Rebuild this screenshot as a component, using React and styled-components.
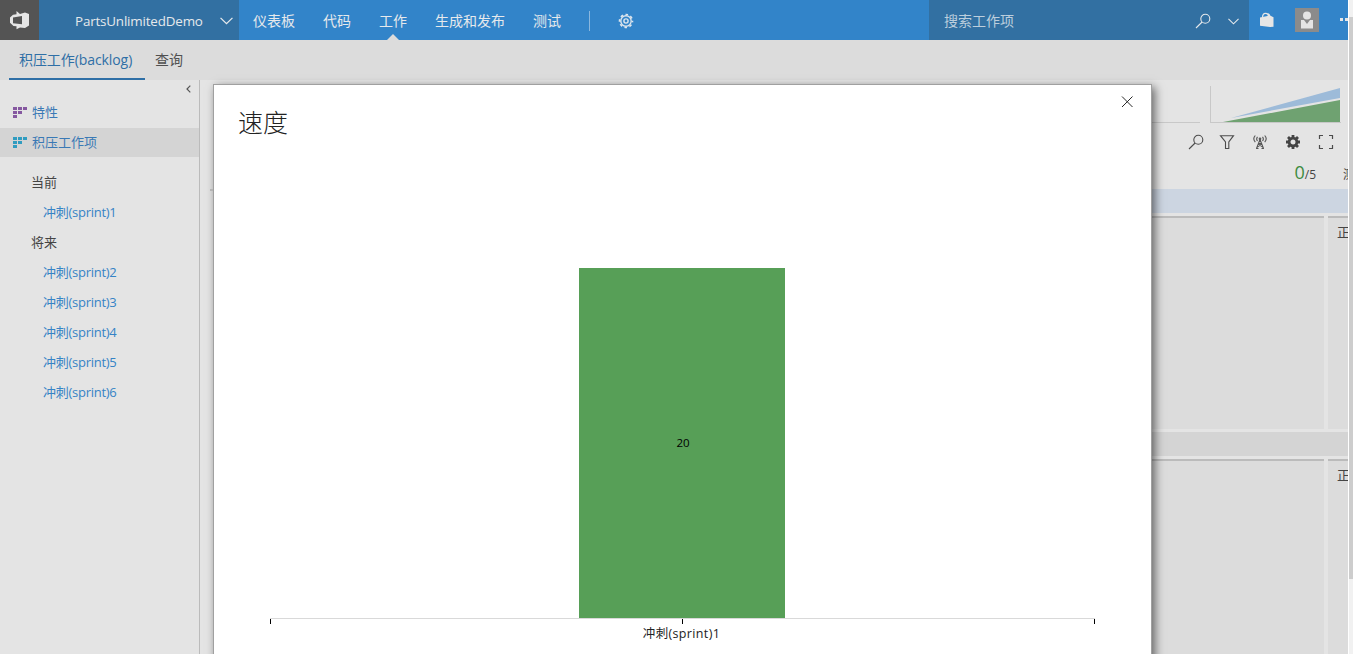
import React from "react";
import styled, { createGlobalStyle } from "styled-components";

const Global = createGlobalStyle`
  *, *::before, *::after { box-sizing: border-box; }
  html, body { margin: 0; overflow: hidden; background: #e4e4e4; }
  body { font-family: "Open Sans", "Noto Sans CJK SC", sans-serif; font-size: 13px; color: #444; }
  svg { display: block; flex: none; }
`;

const Window = styled.div`
  display: flex;
  width: 1353px;
  height: 654px;
  overflow: hidden;
`;
const Page = styled.div`
  position: relative;
  display: flex;
  flex-direction: column;
  width: 1348px;
  overflow: hidden;
`;
const Scrollbar = styled.div`
  width: 5px;
  padding-top: 17px;
  background: #f1f1f1;
  border-left: 1px solid #fff;
`;
const Thumb = styled.div`
  height: 562px;
  background: #cdcdcd;
`;

const TopBar = styled.header`
  display: flex;
  flex: none;
  height: 40px;
  background: #3284c9;
  color: #e6e9ec;
  font-size: 14px;
  line-height: 40px;
  white-space: nowrap;
`;
const LogoBox = styled.div`
  width: 39px;
  padding: 10px 0 0 9px;
  background: #545454;
`;
const Project = styled.div`
  display: flex;
  align-items: center;
  justify-content: space-between;
  width: 200px;
  padding: 1px 6px 0 36px;
  background: #3270a2;
  font-size: 13.4px;
  letter-spacing: -0.17px;
`;
const Nav = styled.nav`
  display: flex;
  flex: 1;
  gap: 28px;
  padding: 1px 0 0 14px;
`;
const NavItem = styled.span`
  position: relative;
  height: 39px;
  &::after {
    content: "";
    display: ${(p) => (p.$active ? "block" : "none")};
    position: absolute;
    left: 8px;
    bottom: 0;
    border: 6px solid transparent;
    border-top: 0;
    border-bottom-color: #dcdcdc;
  }
`;
const NavDivider = styled.span`
  width: 1px;
  height: 20px;
  margin-top: 10px;
  background: #8ab7de;
`;
const NavGear = styled.span`
  padding-top: 12px;
`;
const Search = styled.div`
  display: flex;
  align-items: center;
  width: 320px;
  padding: 2px 10px 0 15px;
  background: #3270a2;
  color: #bccedd;
`;
const SearchText = styled.span`
  flex: 1;
`;
const SearchToggle = styled.span`
  margin-left: 17px;
`;
const Account = styled.div`
  display: flex;
  width: 99px;
  overflow: hidden;
  padding: 8px 0 0 10px;
`;
const Avatar = styled.div`
  width: 24px;
  height: 24px;
  margin: 0 21px 0 20px;
  background: #8b8b8b;
`;

const Tabs = styled.div`
  display: flex;
  flex: none;
  height: 40px;
  padding-left: 9px;
  background: #dcdcdc;
  font-size: 14px;
  line-height: 40px;
  white-space: nowrap;
`;
const Tab = styled.span`
  height: 40px;
  padding: 0 10px;
  color: ${(p) => (p.$active ? "#2f6fa6" : "#505050")};
  border-bottom: ${(p) => (p.$active ? "2px solid #2f6fa6" : "0")};
  width: ${(p) => p.$width};
  letter-spacing: ${(p) => (p.$active ? "-0.08px" : "0")};
`;

const Body = styled.div`
  display: flex;
  flex: 1;
  min-height: 0;
`;
const Sidebar = styled.aside`
  width: 200px;
  border-right: 1px solid #bbb;
`;
const Collapse = styled.div`
  display: flex;
  justify-content: flex-end;
  height: 17px;
  padding: 5px 8px 0 0;
`;
const LevelRow = styled.div`
  display: flex;
  align-items: center;
  gap: 5px;
  height: ${(p) => (p.$selected ? "29px" : "31px")};
  padding: 0 0 2px 13px;
  background: ${(p) => (p.$selected ? "#d4d4d4" : "transparent")};
  color: #3a79b5;
  svg { margin-top: 2px; }
`;
const Sprints = styled.div`
  padding-top: 10px;
`;
const GroupTitle = styled.div`
  height: 30px;
  padding-left: 31px;
  line-height: 30px;
`;
const Sprint = styled.div`
  height: 30px;
  padding-left: 43px;
  line-height: 30px;
  font-size: 13px;
  letter-spacing: -0.27px;
  color: #3583c6;
`;

const Main = styled.main`
  display: flex;
  flex-direction: column;
  flex: 1;
  min-width: 0;
  padding-left: 14px;
`;
const Charts = styled.div`
  display: flex;
  flex: none;
  gap: 10px;
  height: 43px;
  padding-top: 6px;
`;
const ChartBox = styled.div`
  width: ${(p) => p.$width};
  border-bottom: 1px solid #c8c8c8;
  border-left: ${(p) => (p.$axis ? "1px solid #c8c8c8" : "0")};
`;
const Tools = styled.div`
  display: flex;
  flex: none;
  justify-content: flex-end;
  align-items: center;
  gap: 17px;
  height: 38px;
  padding-right: 14px;
  svg:first-child { margin-right: -2px; }
`;
const BoardHead = styled.div`
  display: flex;
  flex: none;
  align-items: baseline;
  justify-content: flex-end;
  height: 28px;
  overflow: hidden;
  line-height: 23px;
  font-size: 12px;
  white-space: nowrap;
`;
const Count = styled.span`
  font-size: 18px;
  color: #3d8b40;
`;
const NextColumn = styled.span`
  width: 5px;
  margin-left: 27px;
  overflow: hidden;
`;
const Lane = styled.div`
  flex: none;
  height: 24px;
  background: ${(p) => p.$color};
`;
const Cells = styled.div`
  display: flex;
  flex: none;
  gap: 4px;
  height: ${(p) => p.$height};
  margin: 3px 0;
`;
const Cell = styled.div`
  flex: ${(p) => (p.$last ? "0 0 20px" : "1")};
  overflow: hidden;
  padding: 4px 0 0 9px;
  background: #dcdcdc;
  border-top: 2px solid #bbb;
  white-space: nowrap;
`;

const Dialog = styled.section`
  position: absolute;
  left: 213px;
  top: 84px;
  width: 939px;
  height: 600px;
  padding: 9px 17px 0 24px;
  background: #fff;
  border: 1px solid #a0a0a0;
  box-shadow: 3px 3px 9px rgba(0, 0, 0, 0.55);
  &::before {
    content: "";
    position: absolute;
    left: -4px;
    top: 104px;
    width: 3px;
    height: 2px;
    background: #b4b4b4;
  }
`;
const DialogHead = styled.div`
  display: flex;
  justify-content: space-between;
  height: 174px;
`;
const Title = styled.h1`
  margin: 9px 0 0;
  font-size: 25px;
  line-height: 38px;
  font-weight: 300;
  color: #222;
`;
const Plot = styled.div`
  display: flex;
  justify-content: center;
  width: 825px;
  height: 350px;
  margin-left: 31px;
`;
const Bar = styled.div`
  width: 206px;
  height: 350px;
  padding-left: 3px;
  background: #579f57;
  color: #000;
  font-size: 11.5px;
  line-height: 349px;
  text-align: center;
`;
const Axis = styled.div`
  display: flex;
  justify-content: space-between;
  width: 825px;
  height: 6px;
  margin-left: 32px;
  border-top: 1px solid #d9d9d9;
`;
const Tick = styled.i`
  width: 1px;
  height: 5px;
  background: #000;
`;
const AxisLabel = styled.div`
  width: 825px;
  margin-left: 31px;
  color: #222;
  font-size: 12.5px;
  line-height: 20px;
  letter-spacing: 0.35px;
  text-align: center;
`;

const Logo = () => (
  <svg width="21" height="20" viewBox="0 0 21 20">
    <path fill="#e6e6e6" fillRule="evenodd" d="M7.500 1 11 4l5-1.500 4 1.500v11.500l-4 2.500-5-.5-3.500 1.800v-3L4.500 16 1 12.800V7.500l3-2.700 3.500-.5zM4 7.500v5.800l9 .9V6z" />
  </svg>
);
const Chevron = ({ w = 12, h = 7, stroke = "#e6e9ec" }) => (
  <svg width={w} height={h} viewBox="0 0 12 7" fill="none" stroke={stroke} strokeWidth="1.2"><path d="m.5.6 5.5 5.4L11.500.6" /></svg>
);
const Magnifier = ({ stroke }) => (
  <svg width="16" height="16" viewBox="0 0 16 16" fill="none" stroke={stroke} strokeWidth="1.1"><circle cx="10.300" cy="5.700" r="4.500" /><path d="M7.100 9 1 15" /></svg>
);
const GearOutline = () => (
  <svg width="16" height="16" viewBox="0 0 16 16" fill="none" stroke="#dce5ed" strokeWidth="1.400">
    <circle cx="8" cy="8" r="5.200" />
    <circle cx="8" cy="8" r="2.100" />
    <circle cx="8" cy="8" r="6.500" strokeWidth="1.600" strokeDasharray="2.600 2.505" strokeDashoffset="1.300" />
  </svg>
);
const Bag = () => (
  <svg width="16" height="20" viewBox="0 0 16 20">
    <path fill="#e6e6e6" d="M1 9.500 11 7.500l3.500 1.800v9.500L11 19 1 17.800z" />
    <path fill="none" stroke="#e6e6e6" strokeWidth="1.200" d="M3.500 9.500c0-3 1.300-4.200 3-4.200S9.500 6.500 9.500 9M6.500 5.700C9 5 10.500 6.500 10.800 8.300" />
  </svg>
);
const Person = () => (
  <svg width="24" height="24" viewBox="0 0 24 24" fill="#e4e4e4">
    <circle cx="12" cy="7.500" r="4" /><path d="M6 12h3l3 4 3-4h3v8.500H6z" />
  </svg>
);
const Dots = () => (
  <svg width="14" height="24" viewBox="0 0 14 24" fill="#e6e6e6">
    <rect x="0" y="10" width="3" height="3" /><rect x="5" y="10" width="3" height="3" /><rect x="10" y="10" width="3" height="3" />
  </svg>
);
const LevelIcon = ({ color }) => (
  <svg width="14" height="11" viewBox="0 0 14 11" fill={color}>
    {[[0, 0], [5, 0], [10, 0], [0, 4], [5, 4], [0, 8]].map(([x, y]) => <rect key={x + "-" + y} x={x} y={y} width="4" height="3" />)}
  </svg>
);
const Funnel = () => (
  <svg width="16" height="16" viewBox="0 0 16 16" fill="none" stroke="#4c4c4c" strokeWidth="1.100"><path d="M1.500 1.700h13L9.800 8v6.500H6.500V8z" /></svg>
);
const Tower = () => (
  <svg width="16" height="16" viewBox="0 0 16 16" fill="none" stroke="#555" strokeWidth="1.100">
    <path d="M8 5.500 4.500 14.500M8 5.500l3.500 9M6.500 9.500h3M5.300 13l4.400-3M10.700 13 6.300 10M4 14.500h2.500M9.500 14.500H12" />
    <path d="M3.300 1.500c-1.800 2-1.800 4.700 0 6.700M5.500 2.800c-1 1.300-1 3 0 4.200M12.700 1.500c1.800 2 1.800 4.700 0 6.700M10.500 2.800c1 1.300 1 3 0 4.200" />
    <circle cx="8" cy="4.800" r=".8" fill="#555" />
  </svg>
);
const GearSolid = () => (
  <svg width="16" height="16" viewBox="0 0 16 16" fill="none" stroke="#444">
    <circle cx="8" cy="8" r="3.900" strokeWidth="2.800" />
    <path strokeWidth="2.800" d="M8 1v2.500M8 12.500V15M1 8h2.500M12.500 8H15M3 3l2 2M11 11l2 2M13 3l-2 2M5 11l-2 2" />
  </svg>
);
const Expand = () => (
  <svg width="16" height="16" viewBox="0 0 16 16" fill="none" stroke="#4c4c4c" strokeWidth="1.200"><path d="M1.500 5V1.500H5M11 1.500h3.500V5M1.500 11v3.500H5M11 14.500h3.500V11" /></svg>
);
const FlowChart = () => (
  <svg width="130" height="36" viewBox="0 0 130 36">
    <path fill="#9dbbd9" d="m20 32 109-30v10z" /><path fill="#6fa271" d="M12 36 129 14v22z" />
  </svg>
);
const Close = () => (
  <svg width="14" height="14" viewBox="0 0 14 14" fill="none" stroke="#282828" strokeWidth="1"><path d="m2 2.500 10.500 10.500M12.500 2.500 2 13" /></svg>
);

export default function App() {
  return (
    <Window>
      <Global />
      <Page>
        <TopBar>
          <LogoBox><Logo /></LogoBox>
          <Project>PartsUnlimitedDemo<Chevron w={13} h={8} /></Project>
          <Nav>
            <NavItem>仪表板</NavItem>
            <NavItem>代码</NavItem>
            <NavItem $active>工作</NavItem>
            <NavItem>生成和发布</NavItem>
            <NavItem>测试</NavItem>
            <NavDivider />
            <NavGear><GearOutline /></NavGear>
          </Nav>
          <Search>
            <SearchText>搜索工作项</SearchText>
            <Magnifier stroke="#e6e9ec" />
            <SearchToggle><Chevron w={11} h={7} /></SearchToggle>
          </Search>
          <Account>
            <Bag />
            <Avatar><Person /></Avatar>
            <Dots />
          </Account>
        </TopBar>
        <Tabs>
          <Tab $active $width="136px">积压工作(backlog)</Tab>
          <Tab>查询</Tab>
        </Tabs>
        <Body>
          <Sidebar>
            <Collapse>
              <svg width="5" height="8" viewBox="0 0 5 8" fill="none" stroke="#555" strokeWidth="1.200"><path d="M4.300.7 1 4l3.300 3.300" /></svg>
            </Collapse>
            <LevelRow><LevelIcon color="#8558a0" />特性</LevelRow>
            <LevelRow $selected><LevelIcon color="#309cc0" />积压工作项</LevelRow>
            <Sprints>
              <GroupTitle>当前</GroupTitle>
              <Sprint>冲刺(sprint)1</Sprint>
              <GroupTitle>将来</GroupTitle>
              {[2, 3, 4, 5, 6].map((n) => <Sprint key={n}>{`冲刺(sprint)${n}`}</Sprint>)}
            </Sprints>
          </Sidebar>
          <Main>
            <Charts>
              <ChartBox $width="986px" />
              <ChartBox $width="131px" $axis><FlowChart /></ChartBox>
            </Charts>
            <Tools>
              <Magnifier stroke="#4c4c4c" /><Funnel /><Tower /><GearSolid /><Expand />
            </Tools>
            <BoardHead><Count>0</Count>/5<NextColumn>测试</NextColumn></BoardHead>
            <Lane $color="#ccd5e1" />
            <Cells $height="213px"><Cell /><Cell $last>正在</Cell></Cells>
            <Lane $color="#d4d4d4" />
            <Cells $height="200px"><Cell /><Cell $last>正在</Cell></Cells>
          </Main>
        </Body>
        <Dialog>
          <DialogHead><Title>速度</Title><Close /></DialogHead>
          <Plot><Bar>20</Bar></Plot>
          <Axis><Tick /><Tick /><Tick /></Axis>
          <AxisLabel>冲刺(sprint)1</AxisLabel>
        </Dialog>
      </Page>
      <Scrollbar><Thumb /></Scrollbar>
    </Window>
  );
}
